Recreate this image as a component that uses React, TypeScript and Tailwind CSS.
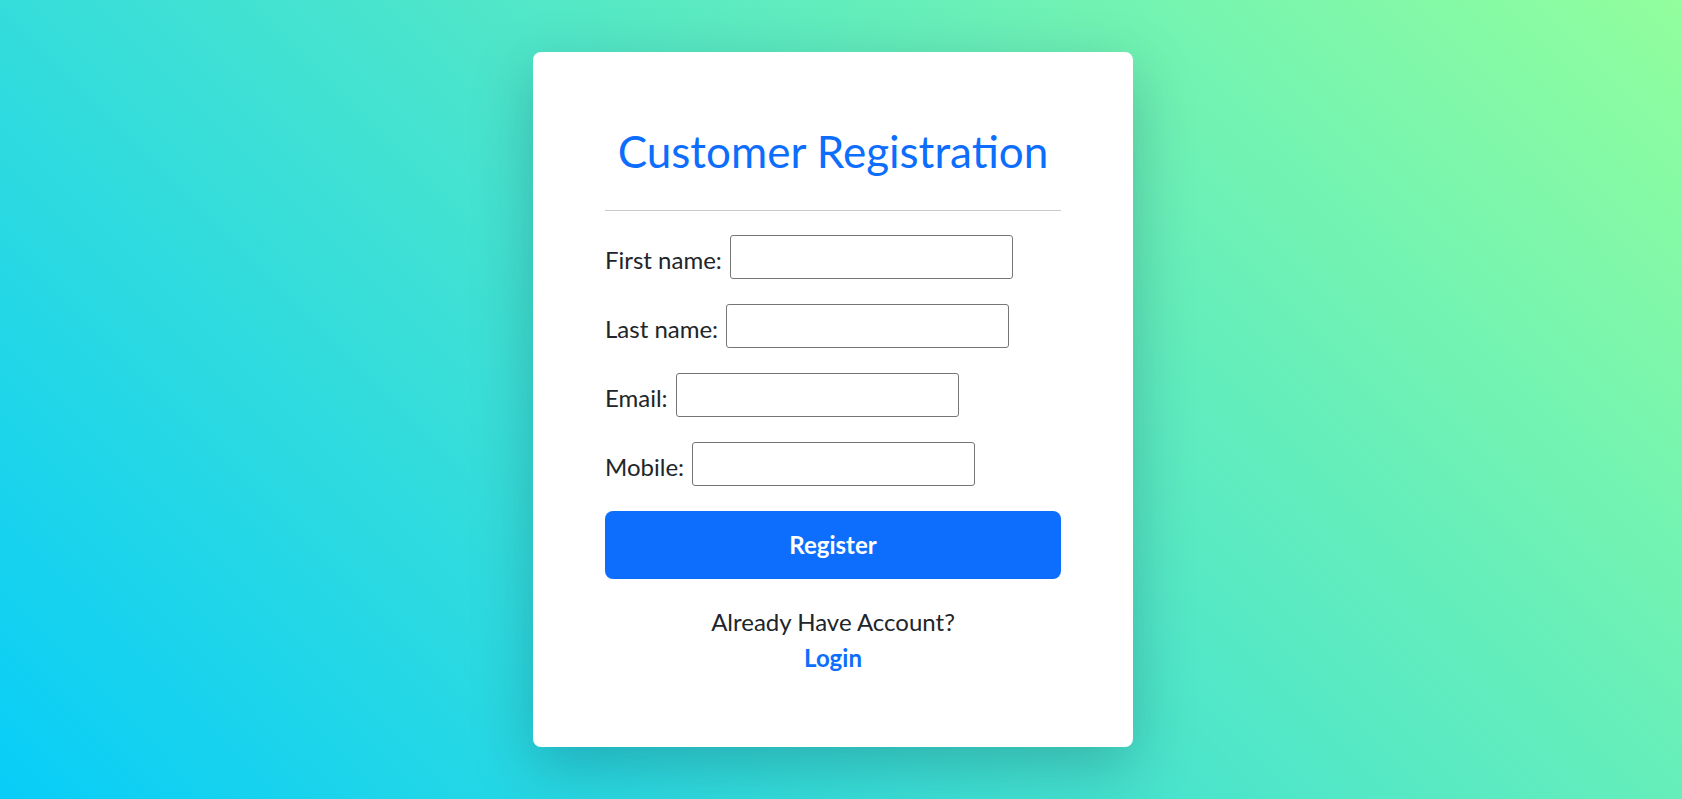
import React from 'react';

const fields = [
    { id: 'firstName', label: 'First name:' },
    { id: 'lastName', label: 'Last name:' },
    { id: 'email', label: 'Email:' },
    { id: 'mobile', label: 'Mobile:' },
];

export default function App() {
    return (
        <div
            className="flex min-h-screen items-center justify-center pr-4 bg-[linear-gradient(45deg,#08cdf8,#92fe9d)] text-[#212529]"
            style={{ fontFamily: 'Lato, "Noto Sans", sans-serif' }}
        >
            <div className="w-[600px] rounded-lg bg-white px-[72px] pt-[73px] pb-[71px] shadow-[0_20px_60px_rgba(0,40,60,0.25)]">
                <h1 className="text-center text-[44px] leading-[52px] font-normal text-[#0d6efd]">Customer Registration</h1>
                <div className="mt-[33px] h-px bg-[#c8c9ca]" />
                <form className="mt-6 flex flex-col gap-[25px]" onSubmit={(e) => e.preventDefault()}>
                    {fields.map((f) => (
                        <div key={f.id} className="flex items-center">
                            <label htmlFor={f.id} className="pt-1 text-2xl leading-[29px]">{f.label}</label>
                            <input
                                id={f.id}
                                className="ml-2 h-11 w-[283px] rounded-[3px] border border-[#767676] bg-white px-2 text-2xl outline-none"
                            />
                        </div>
                    ))}
                    <button type="submit" className="h-[68px] w-full rounded-lg bg-[#0d6efd] text-2xl font-bold text-white">
                        Register
                    </button>
                </form>
                <div className="mt-[25px] text-center text-2xl leading-9">
                    <p>Already Have Account?</p>
                    <a href="#" className="font-bold text-[#0d6efd]">Login</a>
                </div>
            </div>
        </div>
    );
}
